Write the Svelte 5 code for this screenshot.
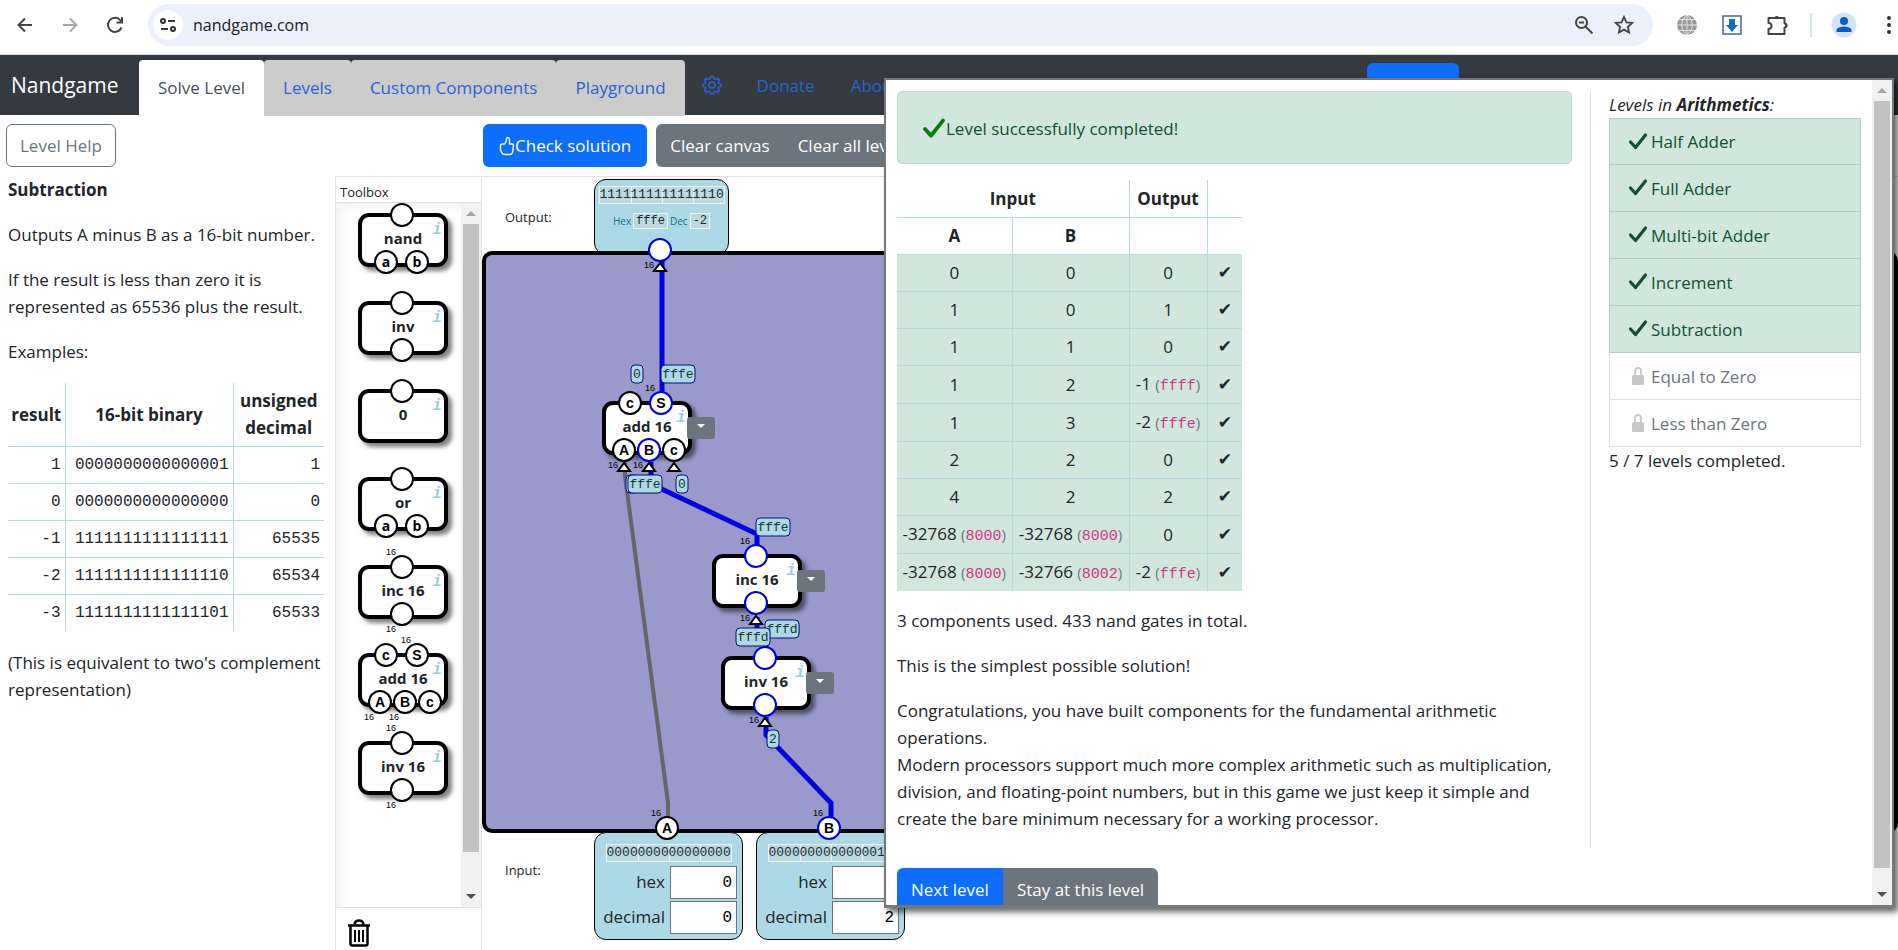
<script>
  const tabs = [
    { label: 'Solve Level', active: true },
    { label: 'Levels' },
    { label: 'Custom Components' },
    { label: 'Playground' }
  ];

  const examples = [
    ['1', '0000000000000001', '1'],
    ['0', '0000000000000000', '0'],
    ['-1', '1111111111111111', '65535'],
    ['-2', '1111111111111110', '65534'],
    ['-3', '1111111111111101', '65533']
  ];

  // Pin offsets are measured from the top-left corner of a 90 x 54 block.
  const one = (wide, live) => [{ x: 44, wide, live }];
  const ab = [{ x: 28, t: 'a' }, { x: 59, t: 'b' }];
  const adderOut = (live) => [{ x: 28, t: 'c', sans: true }, { x: 59, t: 'S', wide: true, sans: true, live }];
  const adderIn = (live) => [
    { x: 22, t: 'A', wide: true, sans: true },
    { x: 47, t: 'B', wide: true, sans: true, live },
    { x: 72, t: 'c', sans: true }
  ];

  const toolbox = [
    { name: 'nand', out: one(), in: ab },
    { name: 'inv', out: one(), in: one() },
    { name: '0', out: one(), in: [] },
    { name: 'or', out: one(), in: ab },
    { name: 'inc 16', out: one(true), in: one(true) },
    { name: 'add 16', out: adderOut(), in: adderIn() },
    { name: 'inv 16', out: one(true), in: one(true) }
  ];

  const placed = [
    { name: 'add 16', x: 120, y: 224, out: adderOut(true), in: adderIn(true) },
    { name: 'inc 16', x: 230, y: 377, out: one(true, true), in: one(true, true) },
    { name: 'inv 16', x: 239, y: 479, out: one(true, true), in: one(true, true) }
  ];

  const wires = [
    { d: 'M180 226V74', live: true },
    { d: 'M169 285V307L275 357V379', live: true },
    { d: 'M275 440V452L284 462V481', live: true },
    { d: 'M284 540V558L349 626V651', live: true },
    { d: 'M143 285V299L186 626V651' }
  ];

  const values = [
    { x: 149, y: 188, t: '0' },
    { x: 179, y: 188, t: 'fffe' },
    { x: 144, y: 298, t: '' },
    { x: 146, y: 298, t: 'fffe' },
    { x: 194, y: 298, t: '0' },
    { x: 274, y: 341, t: 'fffe' },
    { x: 283, y: 443, t: 'fffd' },
    { x: 254, y: 451, t: 'fffd' },
    { x: 285, y: 553, t: '2' }
  ];

  const terminals = [
    { x: 178, y: 73, wide: true, live: true },
    { x: 185, y: 651, t: 'A', wide: true, sans: true },
    { x: 347, y: 651, t: 'B', wide: true, sans: true, live: true }
  ];

  const inputs = [
    { id: 'a', bits: ['0000', '0000', '0000', '0000'], hex: '0', dec: '0' },
    { id: 'b', bits: ['0000', '0000', '0000', '0010'], hex: '2', dec: '2' }
  ];

  const tests = [
    [['0'], ['0'], ['0']],
    [['1'], ['0'], ['1']],
    [['1'], ['1'], ['0']],
    [['1'], ['2'], ['-1', 'ffff']],
    [['1'], ['3'], ['-2', 'fffe']],
    [['2'], ['2'], ['0']],
    [['4'], ['2'], ['2']],
    [['-32768', '8000'], ['-32768', '8000'], ['0']],
    [['-32768', '8000'], ['-32766', '8002'], ['-2', 'fffe']]
  ];

  const levels = [
    { name: 'Half Adder', done: true },
    { name: 'Full Adder', done: true },
    { name: 'Multi-bit Adder', done: true },
    { name: 'Increment', done: true },
    { name: 'Subtraction', done: true },
    { name: 'Equal to Zero' },
    { name: 'Less than Zero' }
  ];
</script>

{#snippet pin(p, cx, cy, labelDy)}
  <circle class="pin" class:live={p.live} {cx} {cy} r="11" />
  {#if p.t}<text class="pin-name" class:sans={p.sans} x={cx} y={cy + 5}>{p.t}</text>{/if}
  {#if p.wide}<text class="width" x={cx - 11} y={cy + labelDy}>16</text>{/if}
{/snippet}

{#snippet gate(g)}
  <rect class="gate" x="2" y="2" width="86" height="50" rx="9" />
  <text class="info" x="79" y="21">i</text>
  <text class="gate-name" x="45" y="31">{g.name}</text>
  {#each g.out as p}{@render pin(p, p.x, 2, -12)}{/each}
  {#each g.in as p}{@render pin(p, p.x, 49, 18)}{/each}
{/snippet}

{#snippet check(size)}
  <svg width={size} height={size} viewBox="0 0 20 20" aria-hidden="true">
    <path d="M2.500 10l5 5.500L17.500 3" fill="none" stroke="currentColor" stroke-width="3.200" stroke-linecap="round" stroke-linejoin="round" />
  </svg>
{/snippet}

{#snippet scrollbar()}
  <div class="scrollbar" aria-hidden="true">
    <svg width="20" height="21" viewBox="0 0 20 21"><path d="M5 13l5-5 5 5z" fill="#a3a3a3" /></svg>
    <div class="thumb"></div>
    <svg width="20" height="21" viewBox="0 0 20 21"><path d="M5 8l5 5 5-5z" fill="#505050" /></svg>
  </div>
{/snippet}

<div class="page">
  <header class="browser">
    <button class="bare" aria-label="Back">
      <svg width="20" height="20" viewBox="0 0 20 20"><path d="M17 10H4M10 3.500L3.500 10l6.500 6.500" fill="none" stroke="#444" stroke-width="2" /></svg>
    </button>
    <button class="bare" aria-label="Forward">
      <svg width="20" height="20" viewBox="0 0 20 20"><path d="M3 10h13M10 3.500L16.500 10 10 16.500" fill="none" stroke="#a8a8a8" stroke-width="2" /></svg>
    </button>
    <button class="bare" aria-label="Reload">
      <svg width="20" height="20" viewBox="0 0 20 20"><path d="M16.500 12.500A7 7 0 1 1 15.500 5.500L17 7.500M17 2v5.500h-5.500" fill="none" stroke="#444" stroke-width="2" /></svg>
    </button>
    <div class="omnibox">
      <span class="site">
        <svg width="18" height="18" viewBox="0 0 18 18" fill="none" stroke="#333" stroke-width="2"><circle cx="4" cy="5" r="2" /><path d="M9 5h7M2 13h7" /><circle cx="14" cy="13" r="2" /></svg>
      </span>
      <input type="text" aria-label="Address" value="nandgame.com" />
      <button class="bare" aria-label="Zoom out">
        <svg width="22" height="22" viewBox="0 0 22 22" fill="none" stroke="#444" stroke-width="2"><circle cx="8.500" cy="8.500" r="5.500" /><path d="M12.500 12.500l7 7M6 8.500h5" /></svg>
      </button>
      <button class="bare" aria-label="Bookmark">
        <svg width="22" height="22" viewBox="0 0 22 22"><path d="M11 3l2.400 5.300 5.800.6-4.300 3.900 1.200 5.700-5.100-2.900-5.100 2.900 1.200-5.700-4.300-3.900 5.800-.6z" fill="none" stroke="#444" stroke-width="1.800" /></svg>
      </button>
    </div>
    <div class="extensions">
      <svg width="22" height="22" viewBox="0 0 22 22"><circle cx="11" cy="11" r="10" fill="#999" /><path d="M11 1v20M1 11h20M3 5.500h16M3 16.500h16M11 1c-7 5-7 15 0 20M11 1c7 5 7 15 0 20" fill="none" stroke="#e4e4e4" /></svg>
      <svg width="20" height="20" viewBox="0 0 20 20"><path d="M1 1h18v18H1z" fill="#fff" stroke="#456a85" stroke-width="1.500" /><path d="M7 4h6v6h3l-6 7-6-7h3z" fill="#0b72b9" /></svg>
      <svg width="22" height="22" viewBox="0 0 22 22"><path d="M2.500 4h16v5.500a2 2 0 0 1 0 4V20h-16v-5a2.500 2.500 0 0 0 0-6z" fill="none" stroke="#444" stroke-width="2" stroke-linejoin="round" /><path d="M8.500 3.500a2.500 2.500 0 0 1 4.500 0zM19 9a2.500 2.500 0 0 1 0 5z" fill="#444" /></svg>
      <span class="rule"></span>
      <svg class="profile" width="26" height="26" viewBox="0 0 26 26"><circle cx="13" cy="13" r="12.500" fill="#d3e3fd" /><circle cx="13" cy="9" r="4" fill="#0b57d0" /><path d="M5.500 20v-2q0-3 7.500-3.500 7.500.5 7.500 3.500v2z" fill="#0b57d0" /></svg>
      <svg class="dots" width="6" height="20" viewBox="0 0 6 20" fill="#333"><circle cx="3" cy="3" r="2" /><circle cx="3" cy="10" r="2" /><circle cx="3" cy="17" r="2" /></svg>
    </div>
  </header>

  <nav class="nav">
    <a class="brand" href="#home">Nandgame</a>
    {#each tabs as tab}
      <a class="tab" class:active={tab.active} href="#tab">{tab.label}</a>
    {/each}
    <a class="link gear" href="#settings" aria-label="Settings">
      <svg width="20" height="20" viewBox="0 0 20 20" fill="none" stroke="currentColor" stroke-width="1.500" stroke-linejoin="round"><circle cx="10" cy="10" r="3" /><path d="M8.500 1.500h3l.6 2.200 1.400.6 2-1.200 2 2-1.200 2 .6 1.400 2 .5v2.500l-2 .6-.6 1.400 1.200 2-2 2-2-1.200-1.400.6-.6 2.100h-3l-.6-2.100-1.400-.6-2 1.200-2-2 1.200-2-.6-1.400-2-.6V9l2-.5.6-1.400-1.200-2 2-2 2 1.200 1.400-.6z" /></svg>
    </a>
    <a class="link" href="#donate">Donate</a>
    <a class="link" href="#about">About</a>
    <span class="nav-block"></span>
  </nav>

  <div class="toolbar">
    <div class="help-slot"><button class="btn outline">Level Help</button></div>
    <button class="btn primary">
      <svg width="16" height="20" viewBox="0 0 16 20" fill="none" stroke="currentColor" stroke-width="1.400" stroke-linejoin="round"><path d="M5.500 8Q7.500 6 7.500 3.500q0-2 1.400-2t1.600 2V8h2.500q1.500 0 1.500 1.500l-.8 6.500q-.4 2.500-2.700 2.500H6q-2 0-3-1.500L1.500 14v-4Q1.500 8 3.500 8z" /></svg>Check solution
    </button>
    <div class="group">
      <button class="btn secondary">Clear canvas</button>
      <button class="btn secondary">Clear all levels</button>
    </div>
  </div>

  <main class="work">
    <section class="help">
      <p><b>Subtraction</b></p>
      <p>Outputs A minus B as a 16-bit number.</p>
      <p>If the result is less than zero it is represented as 65536 plus the result.</p>
      <p>Examples:</p>
      <table class="grid examples">
        <colgroup><col class="c-result" /><col class="c-binary" /><col class="c-dec" /></colgroup>
        <thead><tr><th>result</th><th>16-bit binary</th><th>unsigned decimal</th></tr></thead>
        <tbody>
          {#each examples as row}
            <tr>{#each row as cell}<td>{cell}</td>{/each}</tr>
          {/each}
        </tbody>
      </table>
      <p>(This is equivalent to two's complement representation)</p>
    </section>

    <section class="toolbox">
      <h2>Toolbox</h2>
      <div class="toolbox-body">
        <div class="gates">
          {#each toolbox as g}
            <svg class="tool" width="90" height="54" viewBox="0 0 90 54">{@render gate(g)}</svg>
          {/each}
        </div>
        {@render scrollbar()}
      </div>
      <div class="trash">
        <button class="bare" aria-label="Delete">
          <svg width="24" height="28" viewBox="0 0 24 28" fill="none" stroke="#000"><path d="M1 6.500h22" stroke-width="2.500" /><path d="M7.500 5.500Q8 1.500 12 1.500t4.500 4" stroke-width="2.500" /><path d="M3.500 7v17.500q0 2 2 2h13q2 0 2-2V7" stroke-width="2.500" /><path d="M8 11v12M12 11v12M16 11v12" stroke-width="2" /></svg>
        </button>
      </div>
    </section>

    <section class="circuit">
      <div class="io-row output">
        <span class="io-label">Output:</span>
        <div class="io">
          <div class="bits"><span>1111</span><span>1111</span><span>1111</span><span>1110</span></div>
          <div class="readout"><span>Hex</span><code>fffe</code><span>Dec</span><code>-2</code></div>
        </div>
      </div>
      <div class="board"></div>
      <div class="io-row input">
        <span class="io-label">Input:</span>
        {#each inputs as box}
          <div class="io">
            <div class="bits">{#each box.bits as b}<span>{b}</span>{/each}</div>
            <div class="fields">
              <label for="hex-{box.id}">hex</label><input id="hex-{box.id}" type="text" value={box.hex} />
              <label for="dec-{box.id}">decimal</label><input id="dec-{box.id}" type="text" value={box.dec} />
            </div>
          </div>
        {/each}
      </div>

      <svg class="diagram" width="400" height="700" viewBox="0 0 400 700">
        {#each wires as w}<path class="wire" class:live={w.live} d={w.d} />{/each}
        {#each placed as g}
          <g transform="translate({g.x} {g.y})">
            {@render gate(g)}
            {#each g.in as p}<path class="arrow" d="M{p.x} 62l-6 8h12z" />{/each}
          </g>
        {/each}
        <path class="arrow" d="M178 86l-6 8h12z" />
        {@render pin(terminals[0], terminals[0].x, terminals[0].y, 18)}
        {@render pin(terminals[1], terminals[1].x, terminals[1].y, -12)}
        {@render pin(terminals[2], terminals[2].x, terminals[2].y, -12)}
        {#each values as v}
          <rect class="tag" x={v.x} y={v.y} width={v.t.length > 1 ? 34 : 12} height="18" rx="4" />
          {#if v.t}<text class="tag-text" x={v.x + (v.t.length > 1 ? 17 : 6)} y={v.y + 13}>{v.t}</text>{/if}
        {/each}
      </svg>
      {#each placed as g}
        <button class="menu" aria-label="{g.name} menu" style="left:{g.x + 85}px;top:{g.y + 16}px">
          <svg width="8" height="5" viewBox="0 0 8 5"><path d="M0 0h8L4 4z" fill="#fff" /></svg>
        </button>
      {/each}
    </section>
  </main>

  <div class="dialog" role="dialog" aria-label="Level result">
    <div class="scroll">
      <div class="result">
        <div class="alert"><span class="tick">{@render check(24)}</span>Level successfully completed!</div>
        <table class="grid tests">
          <colgroup><col class="c-a" /><col class="c-b" /><col class="c-out" /><col class="c-ok" /></colgroup>
          <thead>
            <tr><th colspan="2">Input</th><th>Output</th><th></th></tr>
            <tr><th>A</th><th>B</th><th></th><th></th></tr>
          </thead>
          <tbody>
            {#each tests as row}
              <tr>
                {#each row as [value, hex]}
                  <td>{value}{#if hex}{' '}<small>(<code>{hex}</code>)</small>{/if}</td>
                {/each}
                <td class="ok">✔</td>
              </tr>
            {/each}
          </tbody>
        </table>
        <p>3 components used. 433 nand gates in total.</p>
        <p>This is the simplest possible solution!</p>
        <p>Congratulations, you have built components for the fundamental arithmetic operations.<br />Modern processors support much more complex arithmetic such as multiplication, division, and floating-point numbers, but in this game we just keep it simple and create the bare minimum necessary for a working processor.</p>
        <div class="group actions">
          <button class="btn primary">Next level</button>
          <button class="btn secondary">Stay at this level</button>
        </div>
      </div>
      <aside class="levels">
        <div><i>Levels in <b>Arithmetics</b>:</i></div>
        <ul>
          {#each levels as l}
            <li class:done={l.done}>
              {#if l.done}
                {@render check(20)}
              {:else}
                <svg width="20" height="20" viewBox="0 0 20 20" aria-hidden="true"><rect x="4" y="9" width="12" height="10" rx="1.500" fill="#c8c8c8" /><path d="M7 9V5q0-3 3-3t3 3v4" fill="none" stroke="#c8c8c8" stroke-width="1.800" /></svg>
              {/if}
              <span>{l.name}</span>
            </li>
          {/each}
        </ul>
        <div>5 / 7 levels completed.</div>
      </aside>
    </div>
    {@render scrollbar()}
  </div>
</div>

<style>
  :global(body) {
    margin: 0;
    overflow: hidden;
  }

  .page {
    --sans: 'Open Sans', 'Noto Sans', sans-serif;
    --mono: 'Liberation Mono', monospace;
    position: relative;
    display: flex;
    flex-direction: column;
    min-height: 100vh;
    overflow: hidden;
    font: 17px/27px var(--sans);
    color: #212529;
    background: #fff;
  }

  .page * { box-sizing: border-box; }
  p { margin: 0 0 18px; }
  svg { display: block; overflow: visible; flex: none; }
  a { text-decoration: none; }
  button, input { font: inherit; }

  .bare {
    display: flex;
    padding: 0;
    border: 0;
    background: none;
  }

  /* Browser bar */
  .browser {
    display: flex;
    align-items: center;
    gap: 25px;
    height: 55px;
    padding: 0 6px 5px 15px;
    border-bottom: 1px solid #d5d7da;
  }

  .omnibox {
    display: flex;
    align-items: center;
    gap: 18px;
    flex: 1;
    height: 42px;
    margin-left: -2px;
    padding: 0 18px 0 5px;
    border-radius: 21px;
    background: #ebf0fa;
  }

  .site {
    display: flex;
    align-items: center;
    justify-content: center;
    width: 30px;
    height: 30px;
    border-radius: 50%;
    background: #fff;
  }

  .omnibox input {
    flex: 1;
    margin-left: -8px;
    padding: 2px 0 0;
    border: 0;
    background: none;
    color: #202124;
    font-size: 16px;
  }

  .extensions {
    display: flex;
    align-items: center;
    gap: 24px;
    margin-left: -2px;
  }

  .rule {
    width: 2px;
    height: 24px;
    margin-left: -2px;
    background: #d3e3fd;
  }

  .profile { margin-left: -5px; }
  .dots { margin-left: 5px; }

  /* Navigation */
  .nav {
    display: flex;
    height: 60px;
    background: #343a40;
    white-space: nowrap;
  }

  .brand {
    width: 139px;
    padding: 17px 11px;
    color: #fff;
    font-size: 21px;
  }

  .tab {
    height: 56px;
    margin-top: 5px;
    padding: 14px 19px;
    border-radius: 4px 4px 0 0;
    background: #ccc;
    color: #2862d4;
  }

  .tab.active {
    background: #fff;
    color: #495057;
  }

  .link {
    padding: 17px 18px;
    color: #2862d4;
  }

  .gear { padding: 20px 17px; }

  .nav-block {
    width: 92px;
    height: 44px;
    margin: 8px 439px 0 auto;
    border-radius: 6px;
    background: #0d6efd;
  }

  /* Buttons */
  .toolbar {
    display: flex;
    gap: 9px;
    padding: 9px 6px;
    white-space: nowrap;
  }

  .help-slot { width: 468px; }

  .btn {
    display: flex;
    align-items: center;
    height: 43px;
    padding: 0 15px;
    border: 1px solid transparent;
    border-radius: 6px;
    color: #fff;
  }

  .outline {
    padding: 0 13px;
    border-color: #6c757d;
    background: #fff;
    color: #6c757d;
  }

  .primary { background: #0d6efd; }
  .secondary { background: #6c757d; }
  .group { display: flex; }
  .group .btn { padding: 0 13px; }
  .group .btn:first-child { border-radius: 6px 0 0 6px; }
  .group .btn:last-child { border-radius: 0 6px 6px 0; }

  /* Workspace */
  .work {
    display: flex;
    flex: 1;
  }

  .help {
    width: 335px;
    padding: 0 8px;
  }

  .grid {
    border-collapse: collapse;
    table-layout: fixed;
    margin-bottom: 18px;
  }

  .grid th, .grid td {
    height: 37px;
    padding: 4px 2px;
    border: 1px solid #b5d8e2;
  }

  .grid tr:first-child th { border-top: 0; }
  .grid tr > :first-child { border-left: 0; }
  .grid tr > :last-child { border-right: 0; }
  .grid tbody tr:last-child td { border-bottom: 0; }

  .examples { width: 316px; }
  .examples th { height: 63px; }
  .examples td {
    padding: 5px 4px 4px;
    text-align: right;
    font-family: var(--mono);
    font-size: 16px;
  }
  .c-result { width: 57px; }
  .c-binary { width: 168px; }
  .c-dec { width: 91px; }

  .toolbox {
    display: flex;
    flex-direction: column;
    width: 147px;
    border: 1px solid #e2e2e2;
    border-width: 1px 1px 0;
  }

  h2 {
    margin: 0;
    padding: 5px 4px 0;
    border-bottom: 1px solid #e2e2e2;
    font-size: 13px;
    font-weight: 400;
    line-height: 20px;
  }

  .toolbox-body {
    display: flex;
    flex: 1;
    border-bottom: 1px solid #e2e2e2;
  }

  .gates {
    display: flex;
    flex-direction: column;
    gap: 34px;
    flex: 1;
    padding: 10px 0 0 22px;
    box-shadow: inset 5px 5px 8px #f3f3f3;
  }

  .trash {
    height: 42px;
    padding: 11px;
  }

  .scrollbar {
    display: flex;
    flex-direction: column;
    width: 20px;
    background: #f1f1f1;
  }

  .thumb {
    flex: 1;
    margin: 0 2px 34px;
    background: #c1c1c1;
  }

  .circuit {
    position: relative;
    display: flex;
    flex-direction: column;
    flex: 1;
    border-top: 1px solid #e2e2e2;
  }

  .io-row { display: flex; gap: 13px; }
  .io-label {
    width: 99px;
    padding: 26px 23px;
    font-size: 13px;
    line-height: 24px;
  }

  .output { height: 74px; padding-top: 2px; }
  .input { margin-top: -1px; padding-bottom: 10px; }

  .io {
    border: 1px solid #000;
    border-radius: 12px;
    background: #add8e6;
  }

  .output .io { width: 135px; height: 76px; padding: 6px 3px; }
  .input .io { position: relative; z-index: 0; width: 149px; height: 108px; padding: 11px 5px 0; }

  .bits {
    display: flex;
    width: 126px;
    margin: 0 auto;
    border: 1px solid #e9f6fa;
    font: 13px/16px var(--mono);
    color: #12303a;
    background: #bcd9e0;
  }

  .bits span { width: 31px; }
  .bits span + span { box-shadow: inset 1px 0 #e9f6fa; }

  .readout {
    display: flex;
    justify-content: center;
    align-items: center;
    gap: 2px;
    margin-top: 8px;
    font-size: 10px;
    line-height: 18px;
    color: #0b7285;
  }

  .readout code {
    padding: 0 2px;
    border: 1px solid #e9f6fa;
    background: #bcd9e0;
    color: #12303a;
    font: 12px/14px var(--mono);
  }

  .fields {
    display: grid;
    grid-template-columns: 1fr 67px;
    gap: 2px 5px;
    margin-top: 4px;
    line-height: 32px;
    text-align: right;
  }

  .fields input {
    min-width: 0;
    height: 33px;
    padding: 0 4px;
    border: 1px solid #6c757d;
    background: #fff;
    text-align: right;
    font: 16px/31px var(--mono);
  }

  .board {
    position: relative;
    flex: 1;
    border: 4px solid #000;
    border-radius: 10px;
    background: #9999cb;
  }

  .diagram { position: absolute; top: 0; left: 0; }

  .gate {
    fill: #fff;
    stroke: #000;
    stroke-width: 4;
    filter: drop-shadow(4px 4px 2px rgba(0, 0, 0, 0.5));
  }

  .gate-name {
    font: bold 15px var(--sans);
    text-anchor: middle;
    fill: #212529;
  }

  .info {
    font: italic bold 16px var(--mono);
    text-anchor: middle;
    fill: #9fcddb;
  }

  .pin { fill: #fff; stroke: #000; stroke-width: 2; }
  .pin.live { stroke: #0000dd; }
  .pin-name { font: bold 14px var(--sans); text-anchor: middle; }
  .pin-name.sans { font-family: 'Liberation Sans', sans-serif; }
  .width { font: 9px 'Liberation Sans', sans-serif; text-anchor: middle; }
  .wire { fill: none; stroke: #666; stroke-width: 4; }
  .wire.live { stroke: #0000e0; stroke-width: 5; }
  .arrow { fill: #fffff0; stroke: #000; stroke-width: 2; }
  .tag { fill: #add8e6; stroke: #00107c; stroke-width: 1; }
  .tag-text { font: 13px var(--mono); text-anchor: middle; fill: #123a30; }

  .menu {
    position: absolute;
    display: flex;
    align-items: flex-start;
    justify-content: center;
    width: 28px;
    height: 22px;
    padding: 7px 0 0;
    border: 0;
    border-radius: 3px;
    background: #6c757d;
  }

  /* Result dialog */
  .dialog {
    position: absolute;
    inset: 78px 4px 42px 884px;
    z-index: 2;
    display: flex;
    border: 2px solid #777;
    border-bottom-width: 3px;
    background: #fff;
    box-shadow: 4px 4px 6px rgba(0, 0, 0, 0.6);
  }

  .scroll {
    display: flex;
    align-items: flex-start;
    gap: 18px;
    flex: 1;
    padding: 11px;
    overflow: hidden;
  }

  .dialog .scrollbar { height: 100%; }
  .dialog .thumb { margin-bottom: 16px; }
  .result { flex: 1; }
  .result p:last-of-type { margin-bottom: 36px; }

  .alert {
    display: flex;
    align-items: center;
    height: 73px;
    margin-bottom: 16px;
    padding: 2px 24px 0;
    border: 1px solid #badbcc;
    border-radius: 5px;
    background: #d1e7dd;
    color: #0f5132;
  }

  .tick { color: #008000; }

  .tests {
    width: 345px;
    margin-bottom: 16px;
    text-align: center;
  }
  .tests tbody { background: #d1e7dd; }
  .tests td { white-space: nowrap; }
  .c-a { width: 115px; }
  .c-b { width: 117px; }
  .c-out { width: 78px; }
  .c-ok { width: 35px; }
  small { font-size: 15px; line-height: 24px; color: #6c757d; }
  .tests code { color: #d63384; font: 15px/24px var(--mono); }
  .tests .ok { font-family: 'DejaVu Sans', sans-serif; }

  .levels {
    width: 271px;
    min-height: 757px;
    padding-left: 18px;
    border-left: 1px solid #dee2e6;
  }

  ul {
    margin: 0;
    padding: 0;
    list-style: none;
  }

  li {
    display: flex;
    align-items: center;
    gap: 3px;
    height: 47px;
    padding: 0 18px;
    border: 1px solid #dcdfe2;
    border-top-width: 0;
    color: #6c757d;
  }

  li:first-child { border-top-width: 1px; }

  li.done {
    border-color: #b3cdc2;
    background: #d1e7dd;
    color: #0f5132;
  }
</style>
